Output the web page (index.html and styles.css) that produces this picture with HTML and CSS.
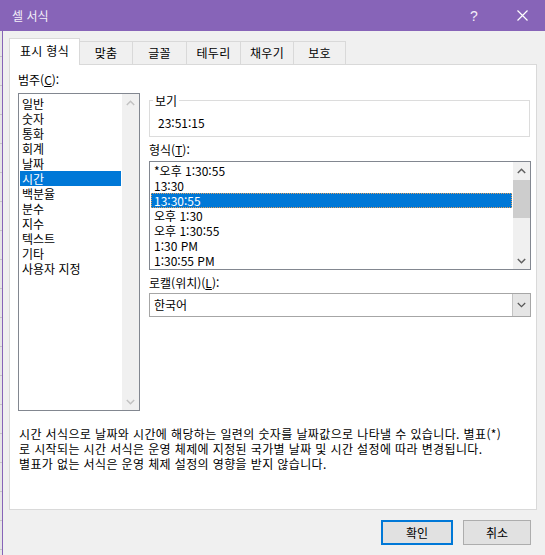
FILE: index.html
```html
<!DOCTYPE html>
<html lang="ko">
<head>
<meta charset="utf-8">
<title>셀 서식</title>
<link rel="stylesheet" href="styles.css">
</head>
<body>
<div class="titlebar">
  <span class="title">셀 서식</span>
  <span class="help">?</span>
  <span class="close"><svg width="11" height="11" viewBox="0 0 11 11"><path d="M0.5 0.5 L10.5 10.5 M10.5 0.5 L0.5 10.5" stroke="#ffffff" stroke-width="1.2" fill="none"/></svg></span>
</div>
<div class="frame">
  <div class="tabs">
    <div class="tab active t1">표시 형식</div>
    <div class="tab t2">맞춤</div>
    <div class="tab t3">글꼴</div>
    <div class="tab t4">테두리</div>
    <div class="tab t5">채우기</div>
    <div class="tab t6">보호</div>
  </div>
  <div class="panel">
    <div class="columns">
      <div class="leftcol">
        <div class="label">범주(<u>C</u>):</div>
        <div class="listbox cat">
          <div class="items">
            <div class="item">일반</div>
            <div class="item">숫자</div>
            <div class="item">통화</div>
            <div class="item">회계</div>
            <div class="item">날짜</div>
            <div class="item sel">시간</div>
            <div class="item">백분율</div>
            <div class="item">분수</div>
            <div class="item">지수</div>
            <div class="item">텍스트</div>
            <div class="item">기타</div>
            <div class="item">사용자 지정</div>
          </div>
          <div class="vscroll disabled">
            <div class="arrow"><svg width="9" height="6" viewBox="0 0 9 6"><path d="M0.8 5 L4.5 1.3 L8.2 5" stroke="#c2c2c2" stroke-width="1.5" fill="none"/></svg></div>
            <div class="track"></div>
            <div class="arrow"><svg width="9" height="6" viewBox="0 0 9 6"><path d="M0.8 1 L4.5 4.7 L8.2 1" stroke="#c2c2c2" stroke-width="1.5" fill="none"/></svg></div>
          </div>
        </div>
      </div>
      <div class="rightcol">
        <fieldset class="sample">
          <legend>보기</legend>
          <div class="sample-value">23:51:15</div>
        </fieldset>
        <div class="label fmt-label">형식(<u>T</u>):</div>
        <div class="listbox fmt">
          <div class="items">
            <div class="item">*오후 1:30:55</div>
            <div class="item">13:30</div>
            <div class="item sel focus">13:30:55</div>
            <div class="item">오후 1:30</div>
            <div class="item">오후 1:30:55</div>
            <div class="item">1:30 PM</div>
            <div class="item">1:30:55 PM</div>
          </div>
          <div class="vscroll">
            <div class="arrow"><svg width="9" height="6" viewBox="0 0 9 6"><path d="M0.8 5 L4.5 1.3 L8.2 5" stroke="#606060" stroke-width="1.5" fill="none"/></svg></div>
            <div class="track"><div class="thumb"></div></div>
            <div class="arrow"><svg width="9" height="6" viewBox="0 0 9 6"><path d="M0.8 1 L4.5 4.7 L8.2 1" stroke="#606060" stroke-width="1.5" fill="none"/></svg></div>
          </div>
        </div>
        <div class="label loc-label">로캘(위치)(<u>L</u>):</div>
        <div class="combo">
          <span class="combo-text">한국어</span>
          <span class="drop"><svg width="9" height="6" viewBox="0 0 9 6"><path d="M0.8 1 L4.5 4.7 L8.2 1" stroke="#555555" stroke-width="1.2" fill="none"/></svg></span>
        </div>
      </div>
    </div>
    <p class="desc">시간 서식으로 날짜와 시간에 해당하는 일련의 숫자를 날짜값으로 나타낼 수 있습니다. 별표(*)<br>로 시작되는 시간 서식은 운영 체제에 지정된 국가별 날짜 및 시간 설정에 따라 변경됩니다.<br>별표가 없는 서식은 운영 체제 설정의 영향을 받지 않습니다.</p>
  </div>
  <div class="buttons">
    <button class="btn default">확인</button>
    <button class="btn cancel">취소</button>
  </div>
</div>
</body>
</html>
```
FILE: styles.css
```css
* { box-sizing: border-box; }

body {
  margin: 0;
  width: 545px;
  height: 555px;
  overflow: hidden;
  font-family: "Noto Sans CJK KR", "Noto Sans", sans-serif;
  font-size: 12px;
  color: #000;
  background-color: #e6e6e6;
  background-image: repeating-linear-gradient(to bottom, transparent 0, transparent 27px, #c6c6c6 27px, #c6c6c6 28px, transparent 28px, transparent 29px);
}

.titlebar {
  height: 31px;
  background: #8764b8;
  display: flex;
  align-items: center;
  color: #f3eff9;
}

.title {
  padding-left: 12px;
  font-size: 12px;
  line-height: 15px;
  flex: 1;
}

.help {
  font-family: "Liberation Sans", sans-serif;
  font-size: 14px;
  line-height: 16px;
  width: 14px;
  margin-right: 33px;
}

.close {
  display: flex;
  width: 11px;
  height: 11px;
  margin-right: 17px;
}

.frame {
  margin-left: 2px;
  border-left: 1px solid #8764b8;
  background: #f0f0f0;
  height: 524px;
  padding-left: 6px;
}

.tabs {
  height: 33px;
  display: flex;
  align-items: flex-end;
}

.tab {
  height: 23px;
  border-top: 1px solid #d9d9d9;
  border-right: 1px solid #d9d9d9;
  background: #f0f0f0;
  text-align: center;
  line-height: 21px;
  font-size: 12px;
  letter-spacing: 0.3px;
}

.tab.active {
  height: 27px;
  margin-bottom: -1px;
  background: #ffffff;
  border-left: 1px solid #d9d9d9;
  position: relative;
  z-index: 1;
  line-height: 24px;
}

.t1 { width: 71px; }
.t2 { width: 53px; }
.t3 { width: 54px; }
.t4 { width: 54px; }
.t5 { width: 53px; }
.t6 { width: 52px; }

.panel {
  width: 528px;
  height: 446px;
  background: #ffffff;
  border: 1px solid #d9d9d9;
  padding: 7px 0 0 8px;
}

.columns {
  display: flex;
  gap: 9px;
  align-items: flex-start;
}

.label {
  line-height: 15px;
  height: 15px;
  white-space: nowrap;
}

.leftcol {
  width: 122px;
  display: flex;
  flex-direction: column;
  gap: 6px;
}

.listbox {
  border: 1px solid #828790;
  background: #fff;
  display: flex;
}

.listbox .items {
  flex: 1;
  padding: 1px;
}

.item {
  height: 15px;
  line-height: 15px;
  padding-left: 2px;
  white-space: nowrap;
}

.item.sel {
  background: #0078d7;
  color: #fff;
}

.item.focus {
  outline: 1px dotted #e0a060;
  outline-offset: -1px;
}

.cat {
  height: 318px;
}

.cat .items {
  padding-top: 2px;
}

.vscroll {
  width: 17px;
  background: #f0f0f0;
  display: flex;
  flex-direction: column;
}

.arrow {
  height: 17px;
  display: flex;
  align-items: center;
  justify-content: center;
}

.track {
  flex: 1;
  padding-top: 1px;
}

.thumb {
  height: 38px;
  background: #cdcdcd;
}

.rightcol {
  width: 382px;
  padding-top: 21px;
  display: flex;
  flex-direction: column;
}

.sample {
  margin: 0;
  width: 381px;
  border: 1px solid #dcdcdc;
  padding: 0 0 6px 3px;
}

.sample legend {
  padding: 0 2px;
  line-height: 15px;
}

.sample-value {
  margin-top: 7px;
  margin-left: 5px;
  line-height: 15px;
}

.fmt-label {
  margin-top: 5px;
}

.fmt {
  margin-top: 4px;
  height: 109px;
}

.fmt .items .item {
  padding-left: 3px;
}

.loc-label {
  margin-top: 5px;
}

.combo {
  margin-top: 3px;
  height: 24px;
  border: 1px solid #a6a6a6;
  display: flex;
  align-items: stretch;
  background: #fff;
}

.combo-text {
  flex: 1;
  line-height: 22px;
  padding-left: 4px;
}

.drop {
  width: 18px;
  background: #e5e5e5;
  border-left: 1px solid #c4c4c4;
  display: flex;
  align-items: center;
  justify-content: center;
}

.desc {
  margin: 15px 0 0 1px;
  line-height: 15px;
  white-space: nowrap;
  letter-spacing: 0.38px;
}

.buttons {
  display: flex;
  justify-content: flex-end;
  gap: 10px;
  padding-right: 6px;
  margin-top: 10px;
  width: 528px;
}

.btn {
  height: 25px;
  width: 72px;
  background: #e1e1e1;
  border: 1px solid #adadad;
  font-family: "Noto Sans CJK KR", "Noto Sans", sans-serif;
  font-size: 12px;
  color: #000;
  padding: 0;
}

.btn.cancel {
  width: 68px;
}

.btn.default {
  border: 2px solid #0078d7;
}
```
